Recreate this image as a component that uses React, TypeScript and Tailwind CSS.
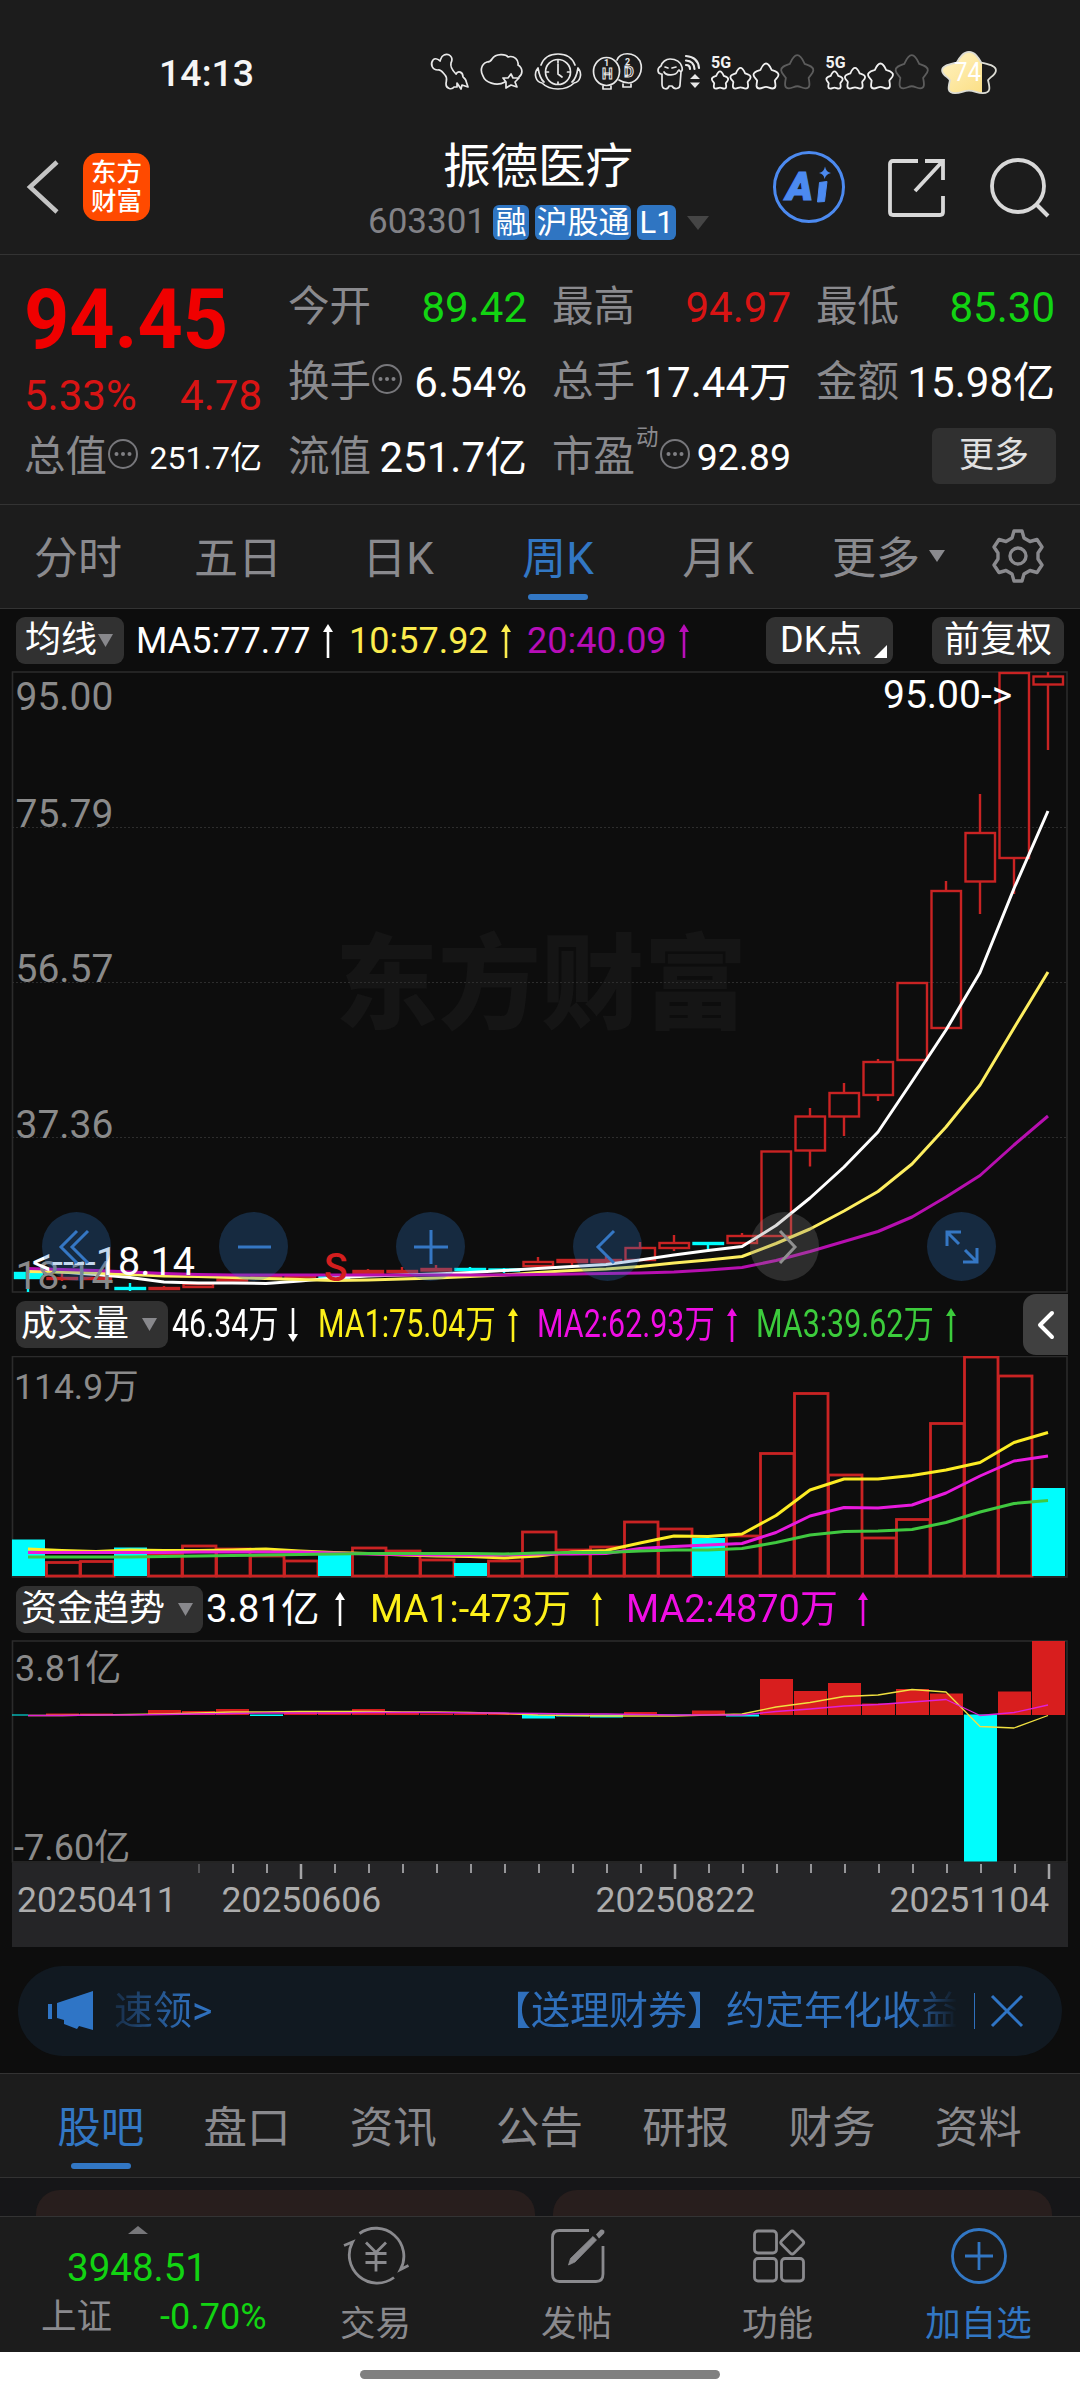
import type { ReactNode } from "react";

type Candle = [top: number, bottom: number, high: number, low: number, down?: boolean];
type Bar = [y: number, down?: boolean];

const STEP = 34;
const FIRST_X = 28;
const RED = "#c92323";
const CYAN = "#00fdfd";

const xOf = (i: number) => FIRST_X + i * STEP;

const candles: Candle[] = [
    [1273, 1278, 1273, 1292, true],
    [1278, 1279, 1273, 1281],
    [1278, 1279, 1277, 1280],
    [1288, 1289, 1283, 1291, true],
    [1288, 1289, 1286, 1290],
    [1284, 1287, 1284, 1287],
    [1279.5, 1280.5, 1279, 1281],
    [1277, 1278, 1276, 1279],
    [1276, 1277, 1276, 1278],
    [1277, 1278, 1276, 1279, true],
    [1271, 1273, 1269, 1273],
    [1271, 1272, 1267, 1272],
    [1269, 1270.5, 1265, 1271],
    [1269, 1270, 1267, 1271, true],
    [1269.5, 1270.5, 1268, 1273, true],
    [1262, 1266, 1257, 1267],
    [1260, 1262, 1259, 1265],
    [1260, 1262, 1256, 1263],
    [1248, 1260, 1242, 1261],
    [1243, 1248, 1235, 1251],
    [1243, 1244, 1242, 1252, true],
    [1236, 1243, 1233, 1244],
    [1151.5, 1236, 1151, 1236],
    [1116.5, 1150.5, 1108, 1166.5],
    [1093, 1116.5, 1083, 1136],
    [1062, 1095, 1059, 1101],
    [983, 1060, 983, 1061],
    [891, 1028, 881, 1028],
    [833, 881.5, 794, 914],
    [673, 858, 673, 894],
    [676.5, 684.5, 672, 750],
];

const ma5 = [1270.5, 1272, 1274.5, 1277.5, 1282, 1283, 1283, 1283.5, 1281, 1278, 1276, 1275, 1274, 1272.5, 1270.5, 1268.5, 1266.5, 1264.5, 1260, 1255, 1250.5, 1246.5, 1225.5, 1198, 1167, 1132, 1081.5, 1030, 972.5, 888.5, 811];
const ma10 = [1271.5, 1272, 1273, 1274.5, 1276, 1276.5, 1277.5, 1278.5, 1279.5, 1280.5, 1280, 1279, 1278, 1276.5, 1275, 1272.5, 1270.5, 1269, 1266.5, 1263, 1260, 1256.5, 1243.5, 1229, 1211, 1191.5, 1164, 1127, 1085, 1028, 972];
const ma20 = [1268.5, 1269.5, 1270.5, 1272, 1273.5, 1274.5, 1275, 1275, 1275, 1275, 1275, 1275, 1275, 1275, 1275, 1274.5, 1274, 1273.5, 1273, 1272, 1270, 1267.5, 1260.5, 1251.5, 1241.5, 1231.5, 1217, 1197, 1175.5, 1145, 1116];

const volumes: Bar[] = [
    [1539.5, true], [1562.5], [1561.5], [1547.5, true], [1554], [1546], [1549], [1556], [1561], [1555, true],
    [1548], [1551], [1560], [1563, true], [1561], [1532], [1550], [1547], [1522], [1529],
    [1538, true], [1536], [1453.5], [1393.5], [1475], [1538], [1519.5], [1423.5], [1357], [1376], [1488, true],
];
const volMa1 = [1549, 1550.5, 1551.5, 1550, 1550.5, 1550.5, 1550, 1549, 1551, 1552.5, 1553.5, 1555, 1556, 1556.5, 1558, 1556, 1552, 1550.5, 1543, 1536, 1536.5, 1534, 1515.5, 1490, 1479, 1479, 1475.5, 1470, 1462.5, 1442.5, 1432.5];
const volMa2 = [1552.5, 1552.5, 1552.5, 1552.5, 1552.5, 1552, 1552, 1552, 1552, 1553, 1554, 1554.5, 1555, 1555, 1555, 1554, 1554, 1553.5, 1548.5, 1546.5, 1545, 1543.5, 1532.5, 1516, 1507.5, 1508, 1505, 1493, 1476, 1461, 1456];
const volMa3 = [1557, 1557, 1557, 1557, 1556.5, 1556, 1555.5, 1555, 1554.5, 1554, 1553.5, 1553.5, 1553.5, 1553.5, 1554, 1553, 1552.5, 1552.5, 1551, 1550, 1550, 1548.5, 1542.5, 1535, 1531.5, 1531, 1529.5, 1522.5, 1512, 1503.5, 1500.5];

const ZERO_Y = 1715;
const funds: Bar[] = [
    [1716, true], [1713.5], [1713.5], [1714], [1710], [1711], [1709], [1716.5, true], [1712], [1712],
    [1709], [1712], [1713.5], [1713.5], [1713.5], [1719, true], [1717, true], [1718, true], [1712], [1716, true],
    [1710.5], [1717, true], [1679], [1691], [1683], [1703.5], [1689], [1693.5], [1862, true], [1691.5], [1641],
];
const fundMa1 = [1715.5, 1715.5, 1715, 1714.5, 1714, 1713, 1712, 1712, 1711.5, 1711.5, 1711.5, 1712, 1712, 1712.5, 1713.5, 1715, 1715.5, 1716, 1716, 1716, 1715, 1714, 1707, 1702.5, 1696.5, 1695, 1689.5, 1692, 1726.5, 1728, 1715.5];
const fundMa2 = [1715.5, 1715.5, 1715, 1715, 1714.5, 1714, 1713.5, 1713, 1713, 1713, 1712.5, 1712.5, 1712.5, 1713, 1713, 1713.5, 1714, 1714, 1714.5, 1715, 1715, 1715, 1711.5, 1709, 1706, 1704.5, 1702, 1699.5, 1715.5, 1712.5, 1705];

const priceLabels = [
    { text: "95.00", y: 710 },
    { text: "75.79", y: 827 },
    { text: "56.57", y: 982 },
    { text: "37.36", y: 1138 },
    { text: "18.14", y: 1289 },
];

function Line({ data, color, width = 3 }: { data: number[]; color: string; width?: number }) {
    const points = data.map((y, i) => `${xOf(i)},${y}`).join(" ");
    return <polyline points={points} fill="none" stroke={color} strokeWidth={width} strokeLinejoin="round" />;
}

function Frame({ top, bottom }: { top: number; bottom: number }) {
    return <rect x={12.5} y={top} width={1054.5} height={bottom - top} fill="none" stroke="#2b2b2b" strokeWidth={1.6} />;
}

const STAR =
    "M50 2C61 2 67 16 72 27C84 31 99 34 98 46C97 56 87 61 84 68C87 84 90 98 75 98C64 98 60 92 50 92C40 92 36 98 25 98C10 98 13 84 16 68C13 61 3 56 2 46C1 34 16 31 28 27C33 16 39 2 50 2Z";

function Star({ x, y, w, h, color }: { x: number; y: number; w: number; h: number; color: string }) {
    return (
        <path
            d={STAR}
            transform={`translate(${x} ${y}) scale(${w / 100} ${h / 100})`}
            fill="none"
            stroke={color}
            strokeWidth={1.8}
            vectorEffect="non-scaling-stroke"
        />
    );
}

function Signal({ x }: { x: number }) {
    return (
        <g transform={`translate(${x} 0)`}>
            <text x={0} y={28} fontSize={17} fontWeight={700} fill="#f2f2f2" textLength={20} lengthAdjust="spacingAndGlyphs">5G</text>
            <Star x={0.5} y={31} w={17} h={18} color="#f2f2f2" />
            <Star x={19} y={27.5} w={21} h={21.5} color="#f2f2f2" />
            <Star x={42} y={23} w={26} h={26} color="#f2f2f2" />
            <Star x={69.5} y={14.5} w={33.5} h={34.5} color="#5c5c5c" />
        </g>
    );
}

function StatusIcons() {
    return (
        <svg width={620} height={70} viewBox="0 0 620 70" className="shrink-0">
            <g fill="none" stroke="#e8e8e8" strokeWidth={1.7} strokeLinecap="round" strokeLinejoin="round">
                <path d="M33 20C30 24 32 30 38 30C41 29 43 33 45 35C48 38 46 41 46 44C46 49 52 50 54 47L57 47L57 43L61 49L62 45L68 47L66 41C66 39 64 38 63 37C63 32 58 30 56 34C53 31 50 27 51 23C54 17 49 13 44 15C41 16 41 19 40 21C38 19 35 18 33 20Z" />
                <path d="M105 42C96 47 85 42 83 36C80 31 81 24 87 22C89 22 91 21 92 19C96 13 106 14 108 17C114 15 119 20 118 25C123 28 123 34 119 37" />
                <path d="M111 34L113 38L119 38L115 42L117 47L111 45L106 48L106 42L103 38L108 38Z" />
                <circle cx={158} cy={32} r={12.5} />
                <path d="M158 24V34L162 37M158 20.5v2M158 42v2M146.5 32h2M167.5 32h2" />
                <path d="M141 25C144 17 151 14 158 14S172 17 175 25M138 28C133 34 136 42 142 43C150 51 166 51 174 43C180 42 183 34 178 28M138 28C139 34 140 39 144 42M178 28C177 34 176 39 172 42" />
                <ellipse cx={206.5} cy={31.5} rx={13} ry={14} />
                <path d="M217 20C220 12 234 11 240 21C244 31 238 42 229 43C225 43 222 42 219 40" />
                <path d="M203 46L203 49L211 49L211 46M223 44L223 47L231 47L231 44" />
                <path d="M261 26C262 22 266 19 270 19C276 19 281 22 282 27C283 31 281 33 279 30M261 26C257 28 257 33 261 34M262 34V44C262 50 268 50 269 46L272 46C274 50 280 49 280 45L281 32M264 32C266 36 276 36 278 31M265 27L268 28M272 28L276 27" />
                <path d="M286 25Q290 25 290 29M286 20.5Q294 21 294.5 29M286 16Q298 17 299 28" strokeWidth={2.2} />
            </g>
            <path d="M290 39L295 34L300 39ZM290 42.5L295 48L300 42.5Z" fill="#e8e8e8" />
            <g fill="#e8e8e8" fontSize={9} fontWeight={700}>
                <text x={204} y={26}>1</text>
                <text x={225} y={25}>2</text>
            </g>
            <g fill="none" stroke="#e8e8e8" strokeWidth={1} fontSize={15} fontWeight={700}>
                <text x={202} y={39}>H</text>
                <text x={224} y={37}>D</text>
            </g>
            <Signal x={311} />
            <Signal x={425.5} />
            <defs>
                <linearGradient id="battery" x1="0" y1="0" x2="1" y2="1">
                    <stop offset="0" stopColor="#fff3c4" />
                    <stop offset="1" stopColor="#fbdc7c" />
                </linearGradient>
                <clipPath id="level">
                    <rect x={538} y={8} width={44} height={50} />
                </clipPath>
            </defs>
            <g clipPath="url(#level)">
                <path d={STAR} transform="translate(541 11) scale(.56 .43)" fill="url(#battery)" />
            </g>
            <Star x={541} y={11} w={56} h={43} color="#dcdcd4" />
            <text x={554} y={41} fontSize={25} fill="#fff" textLength={27} lengthAdjust="spacingAndGlyphs">74</text>
        </svg>
    );
}

function Header() {
    return (
        <header className="h-[255px] border-b border-[#333] bg-[#1c1c1c]">
            <div className="flex h-[112px] items-start pt-[40px]">
                <span className="ml-[159px] mt-[10px] w-[241px] text-[37.5px] leading-[46px] font-medium text-[#f5f5f5]">14:13</span>
                <StatusIcons />
            </div>
            <div className="flex h-[142px]">
                <svg width={34} height={56} viewBox="0 0 34 56" className="mt-[47px] ml-[26px]">
                    <path d="M31 3L4 28L31 53" fill="none" stroke="#c4c4c4" strokeWidth={4.5} />
                </svg>
                <div className="mt-[41px] ml-[23px] flex h-[68px] w-[67px] flex-col items-center justify-center rounded-[15px] bg-[#ff4a00] text-[25.5px] leading-[29px] font-medium text-white">
                    <span>东方</span>
                    <span>财富</span>
                </div>
                <div className="ml-[218px] flex w-[342px] flex-col">
                    <span className="mt-[27px] pl-[75px] text-[47.5px] leading-[56px] text-white">振德医疗</span>
                    <div className="mt-[9px] flex h-[37px] items-center text-[31px]">
                        <span className="w-[125px] text-[35px] text-[#828287]">603301</span>
                        <span className="h-[35px] w-[36px] rounded-[6px] bg-[#2f75c2] text-center leading-[35px] text-white">融</span>
                        <span className="ml-[6px] h-[35px] w-[96px] rounded-[6px] bg-[#2f75c2] text-center leading-[35px] text-white">沪股通</span>
                        <span className="ml-[6px] h-[35px] w-[39px] rounded-[6px] bg-[#2f75c2] text-center leading-[36px] text-white">L1</span>
                        <svg width={22} height={14} className="ml-[11px]">
                            <path d="M0 0H22L11 14Z" fill="#454545" />
                        </svg>
                    </div>
                </div>
                <svg width={76} height={76} viewBox="0 0 76 76" className="mt-[37px] ml-[61px]">
                    <circle cx={38} cy={38} r={34.5} fill="none" stroke="#4c8af0" strokeWidth={3} />
                    <text x={15} y={51} fontSize={39} fontWeight={900} fontStyle="italic" fill="#4c8af0" stroke="#4c8af0" strokeWidth={1.2} textLength={27} lengthAdjust="spacingAndGlyphs">A</text>
                    <path d="M48.5 33.5L56 32.5L53.5 52.5L46.5 53Z" fill="#4c8af0" stroke="#4c8af0" strokeLinejoin="round" />
                    <path d="M54 17.5Q55 23 60 24Q55 25 53.5 30Q53 25 48 24Q53 23 54 17.5Z" fill="#4c8af0" />
                </svg>
                <svg width={60} height={62} viewBox="0 0 60 62" className="mt-[45px] ml-[40px]">
                    <path d="M31 4H6Q3 4 3 7V55Q3 58 6 58H53Q56 58 56 55V39M38 4H56V23M54 6L28 34" fill="none" stroke="#d8d8d8" strokeWidth={3.8} />
                </svg>
                <svg width={62} height={62} viewBox="0 0 62 62" className="mt-[46px] ml-[42px]">
                    <circle cx={29} cy={28} r={26} fill="none" stroke="#d8d8d8" strokeWidth={3.8} />
                    <path d="M47 46L59 58" stroke="#d8d8d8" strokeWidth={4} />
                </svg>
            </div>
        </header>
    );
}

function Info() {
    return (
        <svg width={32} height={32} viewBox="0 0 32 32" className="-mt-[8px] shrink-0">
            <circle cx={16} cy={16} r={14} fill="none" stroke="#77777b" strokeWidth={2} />
            <g fill="#808084">
                <circle cx={9.5} cy={16} r={2} />
                <circle cx={16} cy={16} r={2} />
                <circle cx={22.5} cy={16} r={2} />
            </g>
        </svg>
    );
}

interface QuoteCellProps {
    label: string;
    value: string;
    tone?: string;
    extra?: ReactNode;
}

function QuoteCell({ label, value, tone = "text-[42px] text-white", extra }: QuoteCellProps) {
    return (
        <div className="flex h-[75px] items-center whitespace-nowrap">
            <span className="text-[41.5px] text-[#8a8a8e]">{label}</span>
            {extra}
            <span className={`ml-auto ${tone}`}>{value}</span>
        </div>
    );
}

function Quote() {
    return (
        <section className="flex h-[250px] gap-[26px] border-b border-[#333] bg-[#1c1c1c] pl-[24px]">
            <div className="flex w-[238px] flex-col pt-[15px]">
                <span className="flex h-[100px] w-fit origin-left scale-x-[.94] items-center text-[84px] font-bold text-[#f00000]">94.45</span>
                <div className="flex h-[50px] items-center justify-between text-[42px] text-[#d91414]">
                    <span>5.33%</span>
                    <span>4.78</span>
                </div>
                <QuoteCell label="总值" value="251.7亿" tone="text-[32px] text-white" extra={<Info />} />
            </div>
            <div className="grid w-[767px] grid-cols-3 content-start gap-x-[25px] pt-[15px]">
                <QuoteCell label="今开" value="89.42" tone="text-[42px] text-[#12d412]" />
                <QuoteCell label="最高" value="94.97" tone="text-[42px] text-[#d91414]" />
                <QuoteCell label="最低" value="85.30" tone="text-[42px] text-[#12d412]" />
                <QuoteCell label="换手" value="6.54%" extra={<Info />} />
                <QuoteCell label="总手" value="17.44万" />
                <QuoteCell label="金额" value="15.98亿" />
                <QuoteCell label="流值" value="251.7亿" />
                <QuoteCell
                    label="市盈"
                    value="92.89"
                    tone="text-[37.5px] text-white"
                    extra={
                        <>
                            <span className="-mt-[40px] ml-px text-[22.5px] text-[#8a8a8e]">动</span>
                            <Info />
                        </>
                    }
                />
                <div className="-mr-[1px] -mt-[2px] flex h-[75px] items-center justify-end">
                    <span className="h-[56px] w-[124px] rounded-[7px] bg-[#303030] text-center text-[35px] leading-[55px] text-[#e0e0e0]">更多</span>
                </div>
            </div>
        </section>
    );
}

function PeriodTabs() {
    return (
        <nav className="flex h-[104px] border-b border-[#333] bg-[#1c1c1c] text-[44px] text-[#8a8a8e]">
            {["分时", "五日", "日K", "周K", "月K"].map((tab) => (
                <div key={tab} className="relative flex w-[160px] items-center justify-center pt-[5px] pr-[4px]">
                    <span className={tab === "周K" ? "text-[#3277c4]" : ""}>{tab}</span>
                    {tab === "周K" && <span className="absolute bottom-[8px] left-[48px] h-[6px] w-[60px] rounded-full bg-[#3277c4]" />}
                </div>
            ))}
            <div className="ml-[32px] flex items-center pt-[5px]">
                <span>更多</span>
                <svg width={16} height={12} className="mb-[6px] ml-[9px]">
                    <path d="M0 0H16L8 12Z" fill="#8a8a8e" />
                </svg>
            </div>
            <svg width={56} height={56} viewBox="0 0 56 56" className="mt-[23px] ml-[45px]">
                <path
                    d="M24 3H32L34 10L40 13.5L47 11.5L52 19L48 25V31L52 37L47 44.5L40 42.5L34 46L32 53H24L22 46L16 42.5L9 44.5L4 37L8 31V25L4 19L9 11.5L16 13.5L22 10Z"
                    fill="none"
                    stroke="#8a8a8e"
                    strokeWidth={3.4}
                    strokeLinejoin="round"
                />
                <circle cx={28} cy={28} r={8} fill="none" stroke="#8a8a8e" strokeWidth={3.4} />
            </svg>
        </nav>
    );
}

function Arrow({ down = false }: { down?: boolean }) {
    return (
        <svg width={10} height={34} viewBox="0 0 10 34" className={`shrink-0 ${down ? "rotate-180" : ""}`}>
            <path d="M5 6V34" stroke="currentColor" strokeWidth={2.6} />
            <path d="M0 8L5 0L10 8Z" fill="currentColor" />
        </svg>
    );
}

interface ReadingProps {
    text: string;
    className: string;
    textClass?: string;
    down?: boolean;
}

// className holds the full slot width, so the arrow sits at its right edge
function Reading({ text, className, textClass = "", down }: ReadingProps) {
    return (
        <div className={`flex shrink-0 items-center justify-between whitespace-nowrap ${className}`}>
            <span className={`w-0 origin-left ${textClass}`}>{text}</span>
            <Arrow down={down} />
        </div>
    );
}

function Picker({ label, className, caret }: { label: string; className: string; caret: string }) {
    return (
        <div className={`flex h-[47px] shrink-0 items-center rounded-[9px] bg-[#313131] text-[36px] text-white ${className}`}>
            <span className="leading-[49px] whitespace-nowrap">{label}</span>
            <svg width={15} height={13} className={caret}>
                <path d="M0 0H15L7.5 13Z" fill="#88888c" />
            </svg>
        </div>
    );
}

function MaRow() {
    return (
        <div className="flex h-[62px] items-center pt-px pl-[16px] text-[36px]">
            <Picker label="均线" className="w-[108px] pl-[9px]" caret="ml-[1px]" />
            <Reading text="MA5:77.77" className="ml-[12px] w-[197px] text-white" />
            <Reading text="10:57.92" className="ml-[16px] w-[162px] text-[#fbec4e]" />
            <Reading text="20:40.09" className="ml-[16px] w-[162px] text-[#b80db8]" />
            <div className="relative ml-[77px] h-[47px] w-[127px] rounded-[9px] bg-[#313131] pl-[14px] leading-[46px] text-white">
                DK点
                <svg width={13} height={13} className="absolute right-[6px] bottom-[6px]">
                    <path d="M13 0V13H0Z" fill="#fff" />
                </svg>
            </div>
            <div className="ml-[39px] h-[47px] w-[132px] rounded-[9px] bg-[#313131] text-center leading-[47px] text-white">前复权</div>
        </div>
    );
}

function RoundButton({ children, muted = false }: { children: ReactNode; muted?: boolean }) {
    return (
        <span className={`flex size-[69px] items-center justify-center rounded-full ${muted ? "bg-[#808080]/28 text-[#909090]" : "bg-[#2e75c4]/28 text-[#3577c4]"}`}>
            <svg width={40} height={40} viewBox="0 0 40 40" fill="none" stroke="currentColor" strokeWidth={3}>
                {children}
            </svg>
        </span>
    );
}

function PriceChart() {
    return (
        <div className="relative h-[622px]">
            <svg width={1080} height={622} viewBox="0 671 1080 622" className="block">
                <text x={335} y={1021} fontSize={103} fontWeight={900} fill="#151515">东方财富</text>
                <Frame top={672} bottom={1292} />
                {[827, 982, 1137].map((y) => (
                    <path key={y} d={`M12 ${y + 0.5}H1067`} stroke="#2d2d2d" strokeWidth={1} strokeDasharray="2 2" />
                ))}
                {candles.map(([top, bottom, high, low, down], i) => {
                    const color = down ? CYAN : RED;
                    return (
                        <g key={i} stroke={color} strokeWidth={2.4} fill={down ? CYAN : "none"}>
                            <path d={`M${xOf(i)} ${high}V${top}M${xOf(i)} ${bottom}V${low}`} />
                            <rect x={i === 0 ? 15 : xOf(i) - 14.5} y={top} width={i === 0 ? 27 : 29.5} height={bottom - top} />
                        </g>
                    );
                })}
                <Line data={ma5} color="#ffffff" />
                <Line data={ma10} color="#fdee60" />
                <Line data={ma20} color="#b70fb0" />
                {priceLabels.map((l) => (
                    <text key={l.text} x={15.5} y={l.y} fontSize={39} fill="#8a8a8a">{l.text}</text>
                ))}
                <text x={883} y={707.5} fontSize={39} fill="#fff">{"95.00->"}</text>
                <text x={32} y={1275} fontSize={39.5} fill="#fff">{"<----18.14"}</text>
                <text x={324} y={1280.5} fontSize={39} fontWeight={500} fill="#d31e1e">S</text>
            </svg>
            <div className="absolute top-[541px] left-[42px] flex gap-[108px]">
                <RoundButton><path d="M20 4L4 20L20 36M31 4L15 20L31 36" /></RoundButton>
                <RoundButton><path d="M4 20H37" /></RoundButton>
                <RoundButton><path d="M3 20H37M20 3V37" /></RoundButton>
                <RoundButton><path d="M26 4L10 20L26 36" /></RoundButton>
                <RoundButton muted><path d="M15 4L30 20L15 36" /></RoundButton>
                <RoundButton><path d="M5 19V5H19M6 6L17 17M23 23L34 34M35 21V35H21" /></RoundButton>
            </div>
        </div>
    );
}

function VolumeSection() {
    return (
        <>
            <div className="flex h-[63px] items-center pl-[16px] text-[38px]">
                <Picker label="成交量" className="w-[152px] pl-[5px]" caret="ml-[13px]" />
                <Reading text="46.34万" className="ml-[4px] w-[126px] text-white" textClass="scale-x-[.8]" down />
                <Reading text="MA1:75.04万" className="ml-[20px] w-[200px] text-[#fdf01a]" textClass="scale-x-[.8]" />
                <Reading text="MA2:62.93万" className="ml-[19px] w-[200px] text-[#f00ee4]" textClass="scale-x-[.8]" />
                <Reading text="MA3:39.62万" className="ml-[19px] w-[200px] text-[#3ccc3c]" textClass="scale-x-[.8]" />
                <div className="ml-auto mr-[12px] flex h-[61px] w-[45px] items-center justify-center rounded-l-[13px] bg-[#404040]">
                    <svg width={18} height={30} viewBox="0 0 18 30">
                        <path d="M15 3L3 15L15 27" fill="none" stroke="#fff" strokeWidth={4} strokeLinecap="round" strokeLinejoin="round" />
                    </svg>
                </div>
            </div>
            <svg width={1080} height={222} viewBox="0 1356 1080 222" className="block">
                <Frame top={1356.5} bottom={1577} />
                {volumes.map(([y, down], i) =>
                    down ? (
                        <rect key={i} x={xOf(i) - 16} y={y} width={33} height={1576 - y} fill={CYAN} />
                    ) : (
                        <rect key={i} x={xOf(i) - 15.5} y={y} width={33.5} height={1576 - y} fill="none" stroke={RED} strokeWidth={2.8} />
                    )
                )}
                <Line data={volMa1} color="#fcec24" />
                <Line data={volMa2} color="#e81ade" />
                <Line data={volMa3} color="#40c840" />
                <text x={14} y={1399} fontSize={35.5} fill="#8a8a8a">114.9万</text>
            </svg>
        </>
    );
}

function FundSection() {
    return (
        <>
            <div className="flex h-[62px] items-center pl-[16px] text-[38.5px]">
                <Picker label="资金趋势" className="w-[187px] pl-[5px]" caret="ml-[13px]" />
                <Reading text="3.81亿" className="ml-[3px] w-[139px] text-white" />
                <Reading text="MA1:-473万" className="ml-[25px] w-[232px] text-[#fdf01a]" textClass="scale-x-[.985]" />
                <Reading text="MA2:4870万" className="ml-[24px] w-[242px] text-[#f00ee4]" textClass="scale-x-[.985]" />
            </div>
            <svg width={1080} height={223} viewBox="0 1640 1080 223" className="block">
                <Frame top={1641} bottom={1862} />
                {funds.map(([y, down], i) => (
                    <rect
                        key={i}
                        x={xOf(i) - 16}
                        y={down ? ZERO_Y - 0.5 : y}
                        width={i === 0 ? 16 : 33}
                        height={Math.abs(y - ZERO_Y)}
                        fill={down ? CYAN : "#d81e1e"}
                    />
                ))}
                <Line data={fundMa1} color="#f0e040" width={1.3} />
                <Line data={fundMa2} color="#e020d8" width={1.3} />
                <text x={15} y={1681} fontSize={36} fill="#8a8a8a">3.81亿</text>
                <text x={14} y={1859.5} fontSize={36} fill="#8a8a8a">-7.60亿</text>
            </svg>
            <div className="mx-[12px] h-[84px] bg-[#252527]">
                <svg width={1056} height={84} viewBox="12 1863 1056 84" className="block">
                    {candles.map((_, i) => {
                        if (i < 5) return null;
                        const major = i === 8 || i === 19 || i === 30;
                        return (
                            <path
                                key={i}
                                d={`M${xOf(i) + 1} 1864V${major ? 1879 : 1873}`}
                                stroke={i === 5 ? "#5a5a5c" : "#a4a4a6"}
                                strokeWidth={major ? 2.5 : 1.8}
                            />
                        );
                    })}
                    <g fontSize={35.5} fill="#adadad">
                        <text x={17} y={1912}>20250411</text>
                        <text x={221.5} y={1912}>20250606</text>
                        <text x={595.5} y={1912}>20250822</text>
                        <text x={889.5} y={1912}>20251104</text>
                    </g>
                </svg>
            </div>
        </>
    );
}

function Notice() {
    return (
        <div className="mx-[18px] mt-[19px] mb-[17px] flex h-[90px] items-center rounded-full bg-[#111921] text-[39px] text-[#2f70bd]">
            <svg width={46} height={40} viewBox="0 0 46 40" className="ml-[30px]">
                <path d="M0 13H4V28H0ZM9 12L45 0V39L31 35L29 38L16 33L16 29L9 27Z" fill="#2f75c6" />
            </svg>
            <div className="mt-px ml-[21px] flex w-[842px] justify-between overflow-hidden whitespace-nowrap [mask-image:linear-gradient(to_right,rgb(0_0_0/.25),black_9%,black_94%,transparent)]">
                <span className="-ml-px">速领&gt;</span>
                <span className="-mr-[3px]">【送理财券】约定年化收益</span>
            </div>
            <span className="ml-[17px] h-[36px] w-px bg-[#2f70bd]" />
            <svg width={34} height={34} viewBox="0 0 34 34" className="ml-[15px]">
                <path d="M2 2L32 32M32 2L2 32" stroke="#2f75c6" strokeWidth={3} />
            </svg>
        </div>
    );
}

function SectionTabs() {
    return (
        <nav className="flex h-[105px] border-y border-[#333] bg-[#1c1c1c] px-[28px] text-[43.5px] text-[#8a8a8e]">
            {["股吧", "盘口", "资讯", "公告", "研报", "财务", "资料"].map((tab, i) => (
                <div key={tab} className="relative flex flex-1 items-center justify-center pt-[6px] pr-px">
                    <span className={i === 0 ? "text-[#3277c4]" : ""}>{tab}</span>
                    {i === 0 && <span className="absolute bottom-[8px] h-[6px] w-[60px] rounded-full bg-[#3277c4]" />}
                </div>
            ))}
        </nav>
    );
}

function NavItem({ label, children, active = false }: { label: string; children: ReactNode; active?: boolean }) {
    return (
        <div className={`flex w-[201px] flex-col items-center pt-[7px] ${active ? "text-[#3277c4]" : "text-[#8a8a8e]"}`}>
            <svg width={66} height={64} viewBox="0 0 66 64" fill="none" stroke="currentColor" strokeWidth={2.8}>
                {children}
            </svg>
            <span className="mt-[11px] text-[35.5px] leading-[50px]">{label}</span>
        </div>
    );
}

function BottomNav() {
    return (
        <footer className="flex h-[136px] border-t border-[#333] bg-[#1c1c1c]">
            <div className="flex w-[275px] flex-col pt-[9px]">
                <svg width={20} height={8} className="ml-[128px]">
                    <path d="M0 8L10 0L20 8Z" fill="#77777a" />
                </svg>
                <span className="mt-[11px] pl-[67px] text-[38.5px] leading-[46px] text-[#12d412]">3948.51</span>
                <div className="mt-[3px] flex items-center pl-[41px] leading-[46px]">
                    <span className="w-[119px] text-[35.5px] text-[#8a8a8e]">上证</span>
                    <span className="-mt-[1px] text-[36px] text-[#12d412]">-0.70%</span>
                </div>
            </div>
            <NavItem label="交易">
                <path d="M16.5 9.5A28 28 0 0 1 57.5 45.5L65.5 41.5M51 53.5A28 28 0 0 1 9.5 18L1 21.5" />
                <path d="M23 18.5L33 28.5L43 18.5M33 28.5V47.5M22.5 29.5H43.5M22.5 38.5H43.5" />
            </NavItem>
            <NavItem label="发帖">
                <path d="M45 6.5H15.5Q8.5 6.5 8.5 13.5V50Q8.5 57.5 15.5 57.5H52Q59 57.5 59 50V22" />
                <path d="M24.5 41L26.5 34.5L49 12.5L52.5 16L31 38Z" fill="currentColor" strokeWidth={0.8} />
                <path d="M52 10.5L56.5 5.8Q58.5 4.800 60 6.500Q61 8.200 60 9.500L55 14.500Z" fill="currentColor" stroke="none" />
            </NavItem>
            <NavItem label="功能">
                <rect x={9.5} y={7} width={22} height={22} rx={3.5} />
                <rect x={9.5} y={34.5} width={22} height={22.500} rx={3.5} />
                <rect x={36.5} y={34.5} width={22} height={22.500} rx={3.5} />
                <rect x={38.5} y={9.8} width={17.500} height={17.500} rx={2.5} transform="rotate(45 47.250 18.500)" />
            </NavItem>
            <NavItem label="加自选" active>
                <circle cx={33} cy={32} r={26.5} />
                <path d="M19 32H47M33 18V46" />
            </NavItem>
        </footer>
    );
}

export default function App() {
    return (
        <div className="h-[2400px] w-[1080px] overflow-hidden bg-[#0d0d0d] font-['Roboto','Noto_Sans_CJK_SC',sans-serif]">
            <Header />
            <Quote />
            <PeriodTabs />
            <MaRow />
            <PriceChart />
            <VolumeSection />
            <FundSection />
            <Notice />
            <SectionTabs />
            <div className="flex h-[38px] gap-[18px] overflow-hidden bg-[#161618] pt-[12px] pl-[36px]">
                <div className="h-[80px] w-[499px] shrink-0 rounded-[24px] bg-[#281e1d]" />
                <div className="h-[80px] w-[499px] shrink-0 rounded-[24px] bg-[#281e1d]" />
            </div>
            <BottomNav />
            <div className="h-[48px] bg-white pt-[18px]">
                <div className="mx-auto h-[9px] w-[360px] rounded-full bg-[#808080]" />
            </div>
        </div>
    );
}
